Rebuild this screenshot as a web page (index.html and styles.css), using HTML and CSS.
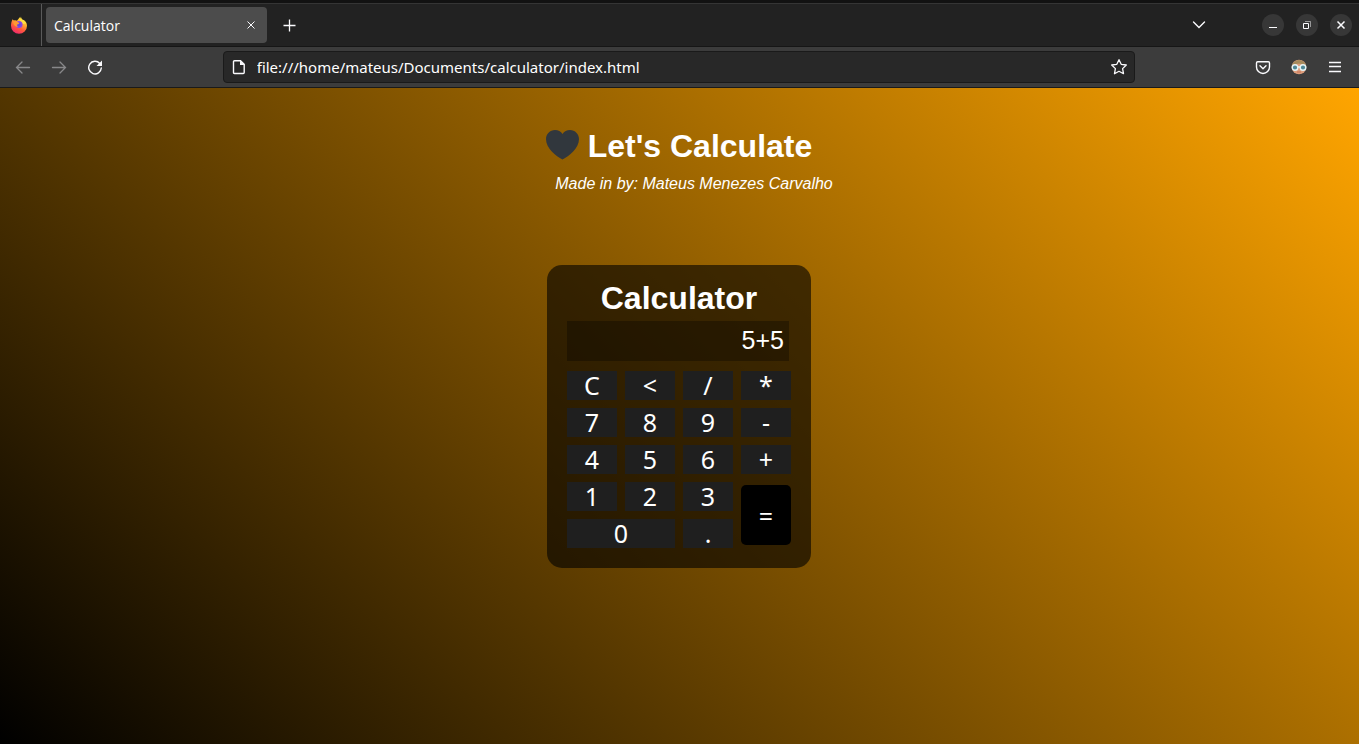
FILE: index.html
```html
<!DOCTYPE html>
<html lang="en">
<head>
<meta charset="utf-8">
<title>Calculator</title>
<link rel="stylesheet" href="styles.css">
</head>
<body>
<header class="browser">
  <div class="tabs">
    <button class="pinned" aria-label="Firefox View">
      <svg width="18" height="18" viewBox="0 0 18 18">
        <defs>
          <linearGradient id="flame" x1=".8" y1="0" x2=".3" y2="1"><stop offset="0" stop-color="#fff04a"/><stop offset=".35" stop-color="#ffb02e"/><stop offset=".65" stop-color="#ff5a3c"/><stop offset="1" stop-color="#f0266f"/></linearGradient>
          <radialGradient id="globe"><stop offset="0" stop-color="#4b4fe0"/><stop offset="1" stop-color="#9b45e0"/></radialGradient>
        </defs>
        <g stroke="none">
          <path fill="url(#flame)" d="M2.600 3.200C3 4 3.500 4.300 4 4.400C5 4 6 4.200 7 4.700C8 3.500 8.800 2.500 9.800 1.200C10.500 3.300 11.500 3.500 12.300 5L12.600 3.500C15.500 4.500 17 7 17 9.800A8 8 0 0 1 1 9.800C1 7 1.600 5 2.600 3.200Z"/>
          <path fill="#ffe141" d="M11 .6C11 4 15 4.500 16 7.500L13 8L9.500 4Z"/>
          <circle cx="9" cy="8.500" r="3.600" fill="url(#globe)"/>
          <path fill="#ff9a32" d="M3.500 5.500Q5.500 4.500 7.200 5.600Q7.800 6.600 9.400 7Q8.600 8.500 7 8.600Q6.500 10 8 11Q5 11 3.500 8Z"/>
        </g>
      </svg>
    </button>
    <div class="tab">
      <span>Calculator</span>
      <button class="icon small" aria-label="Close tab"><svg width="10" height="10" viewBox="0 0 10 10"><path d="M1.500 1.500l7 7m0-7l-7 7"/></svg></button>
    </div>
    <button class="icon add" aria-label="New tab"><svg width="13" height="13" viewBox="0 0 13 13"><path stroke-width="1.300" d="M6.500 0.500v12M.5 6.500h12"/></svg></button>
    <div class="window">
      <button class="icon list" aria-label="List all tabs"><svg width="14" height="14" viewBox="0 0 14 14"><path stroke-width="1.400" stroke-linecap="round" d="M1.500 4L7 9.500 12.500 4"/></svg></button>
      <button class="round" aria-label="Minimize"><svg width="12" height="12" viewBox="0 0 12 12"><path d="M2 8.500h8"/></svg></button>
      <button class="round" aria-label="Restore"><svg width="12" height="12" viewBox="0 0 12 12"><path d="M2.500 4.500h5v5h-5z"/><path opacity=".5" d="M4 2.500h5.500V8"/></svg></button>
      <button class="round" aria-label="Close"><svg width="12" height="12" viewBox="0 0 12 12"><path stroke-width="1.500" d="M2.500 2.500l7 7m0-7l-7 7"/></svg></button>
    </div>
  </div>
  <div class="toolbar">
    <div class="nav">
      <button class="icon" aria-label="Back" disabled><svg width="16" height="16" viewBox="0 0 16 16"><path stroke-width="1.300" stroke-linecap="round" d="M14.500 8.500h-13M7 3L1.500 8.500 7 14"/></svg></button>
      <button class="icon" aria-label="Forward" disabled><svg width="16" height="16" viewBox="0 0 16 16"><path stroke-width="1.300" stroke-linecap="round" d="M1.500 8.500h13M9 3l5.500 5.500L9 14"/></svg></button>
      <button class="icon" aria-label="Reload"><svg width="16" height="16" viewBox="0 0 16 16"><path stroke-width="1.400" stroke-linecap="round" d="M12.800 4.500A6.300 6.300 0 1 0 14.300 9"/><path fill="#fbfbfe" stroke="none" d="M15 1.500V7H9.500z"/></svg></button>
    </div>
    <div class="address">
      <svg width="16" height="16" viewBox="0 0 16 16"><path stroke-width="1.400" d="M3.500 1.700h6L13.200 5.400v8.100q0 1-1 1H3.500q-1 0-1-1V2.700q0-1 1-1z"/><path fill="#fbfbfe" stroke="none" d="M9 1.500l4.500 4.500H9z"/></svg>
      <input class="url" type="text" aria-label="Address" value="file:///home/mateus/Documents/calculator/index.html">
      <button class="icon" aria-label="Bookmark this page"><svg width="18" height="18" viewBox="0 0 18 18"><path stroke-width="1.300" stroke-linejoin="round" d="M9 1.700l2.200 4.600 5.100.7-3.700 3.600.9 5.100L9 13.300l-4.500 2.400.9-5.100L1.700 7l5.100-.7z"/></svg></button>
    </div>
    <div class="tools">
      <button class="icon" aria-label="Save to Pocket"><svg width="16" height="16" viewBox="0 0 16 16"><path stroke-width="1.400" stroke-linecap="round" stroke-linejoin="round" d="M2.700 2.700h10.600q1.200 0 1.200 1.200V8a6.500 6.500 0 0 1-13 0V3.900q0-1.200 1.200-1.200zM5 6.800l3 2.900 3-2.900"/></svg></button>
      <button class="icon" aria-label="Account"><svg width="16" height="16" viewBox="0 0 16 16"><g stroke="none"><circle cx="8" cy="8" r="7.300" fill="#dc9d7c"/><path fill="#a58a5c" d="M.8 7A7.300 7.300 0 0 1 15.200 7Q12 4.500 8 4.800Q4 4.500 .8 7z"/><path fill="#c96f55" d="M6 12.500h4v1H6z"/></g><g stroke="#e4f3f5" stroke-width="1.400"><circle cx="4" cy="8.500" r="2.800" fill="#4f8796"/><circle cx="12" cy="8.500" r="2.800" fill="#4f8796"/><path d="M6.500 8h3"/></g></svg></button>
      <button class="icon" aria-label="Open application menu"><svg width="16" height="16" viewBox="0 0 16 16"><path stroke-width="1.300" d="M2 3.500h12M2 7.500h12M2 12.500h12"/></svg></button>
    </div>
  </div>
</header>
<main class="page">
  <h1 class="heading"><svg width="33" height="34" viewBox="0 0 33 34"><path fill="#31373d" stroke="none" d="M16.500 31.500C10 28 0 20.500 0 11C0 6 4 2 9 2C12 2 15 3.500 16.500 6C18 3.500 21 2 24 2C29 2 33 6 33 11C33 20.500 23 28 16.500 31.500z"/></svg>Let's Calculate</h1>
  <p class="author">Made in by: Mateus Menezes Carvalho</p>
  <section class="calculator">
    <h2 class="title">Calculator</h2>
    <input class="result" type="text" aria-label="Result" value="5+5" readonly>
    <div class="keys">
      <button class="key">C</button><button class="key">&lt;</button><button class="key">/</button><button class="key">*</button>
      <button class="key">7</button><button class="key">8</button><button class="key">9</button><button class="key">-</button>
      <button class="key">4</button><button class="key">5</button><button class="key">6</button><button class="key">+</button>
      <button class="key">1</button><button class="key">2</button><button class="key">3</button><button class="key equals">=</button>
      <button class="key zero">0</button><button class="key">.</button>
    </div>
  </section>
</main>
</body>
</html>
```
FILE: styles.css
```css
* { box-sizing: border-box; margin: 0; }
body {
  min-height: 100vh;
  display: flex;
  flex-direction: column;
  font-family: "Liberation Sans", sans-serif;
  color: #fff;
}
button { padding: 0; border: 0; background: none; color: inherit; }
input { border: 0; padding: 0; color: inherit; outline: 0; }
svg { display: block; flex: none; fill: none; stroke: #fbfbfe; }

.browser { border-top: 3px solid #121212; font-family: "Noto Sans", sans-serif; }
.tabs {
  display: flex;
  align-items: center;
  height: 44px;
  border-top: 1px solid #353535;
  border-bottom: 1px solid #161616;
  background: #222;
}
.pinned {
  display: grid;
  place-items: center;
  align-self: stretch;
  width: 42px;
  padding-right: 4px;
  border-right: 1px solid #5a5a5a;
}
.tab {
  display: flex;
  align-items: center;
  justify-content: space-between;
  width: 221px;
  height: 36px;
  margin-left: 4px;
  padding: 0 8px;
  border-radius: 4px;
  background: #4c4c4c;
  font-family: "Open Sans", sans-serif;
  font-size: 14px;
}
.icon { display: grid; place-items: center; width: 36px; height: 32px; }
.small { width: 16px; height: 16px; }
.add { margin-left: 4px; }
.window { display: flex; align-items: center; gap: 12px; margin-left: auto; padding-right: 7px; }
.list { margin-right: 33px; }
.round {
  display: grid;
  place-items: center;
  width: 22px;
  height: 22px;
  border-radius: 50%;
  background: #373737;
}
.toolbar {
  display: flex;
  justify-content: space-between;
  align-items: center;
  height: 41px;
  padding: 0 6px 0 5px;
  border-bottom: 1px solid #1a1a1a;
  background: #3c3c3c;
}
.nav, .tools { display: flex; flex: 1; }
.tools { justify-content: flex-end; }
.icon:disabled { opacity: .4; }
.address {
  display: flex;
  align-items: center;
  gap: 10px;
  width: 67.7%;
  height: 32px;
  padding-left: 7px;
  border: 1px solid #1a1a1a;
  border-radius: 4px;
  background: #282828;
}
.address .icon { width: 30px; }
.url { flex: 1; min-width: 0; background: none; font-family: "Noto Sans", sans-serif; font-size: 15px; }

.page {
  flex: 1;
  display: flex;
  flex-direction: column;
  align-items: center;
  padding: 40px 1px 0 0;
  background: linear-gradient(45deg, #000, #ffa500);
}
.heading { display: flex; gap: 9px; font-size: 32px; line-height: 36px; }
.author { margin: 10px 0 0 30px; font-size: 16px; line-height: 20px; font-style: italic; }
.calculator {
  margin-top: 71px;
  padding: 15px 20px 20px;
  border-radius: 15px;
  background: rgba(0, 0, 0, .6);
}
.title { font-size: 32px; line-height: 36px; text-align: center; }
.result {
  display: block;
  width: 222px;
  height: 40px;
  margin: 5px 0 10px;
  padding: 0 5px 2px 0;
  background: rgba(0, 0, 0, .3);
  font-family: "Liberation Sans", sans-serif;
  font-size: 25px;
  text-align: right;
}
.keys { display: grid; grid-template-columns: repeat(4, 50px); grid-auto-rows: 29px; gap: 8px; }
.key {
  display: grid;
  place-items: center;
  background: #1f1f1f;
  font-family: "Noto Sans", sans-serif;
  font-size: 25px;
  line-height: 29px;
}
.zero { grid-column: span 2; }
.equals { grid-row: span 2; align-self: center; height: 60px; padding-top: 2px; border-radius: 5px; background: #000; }
```
